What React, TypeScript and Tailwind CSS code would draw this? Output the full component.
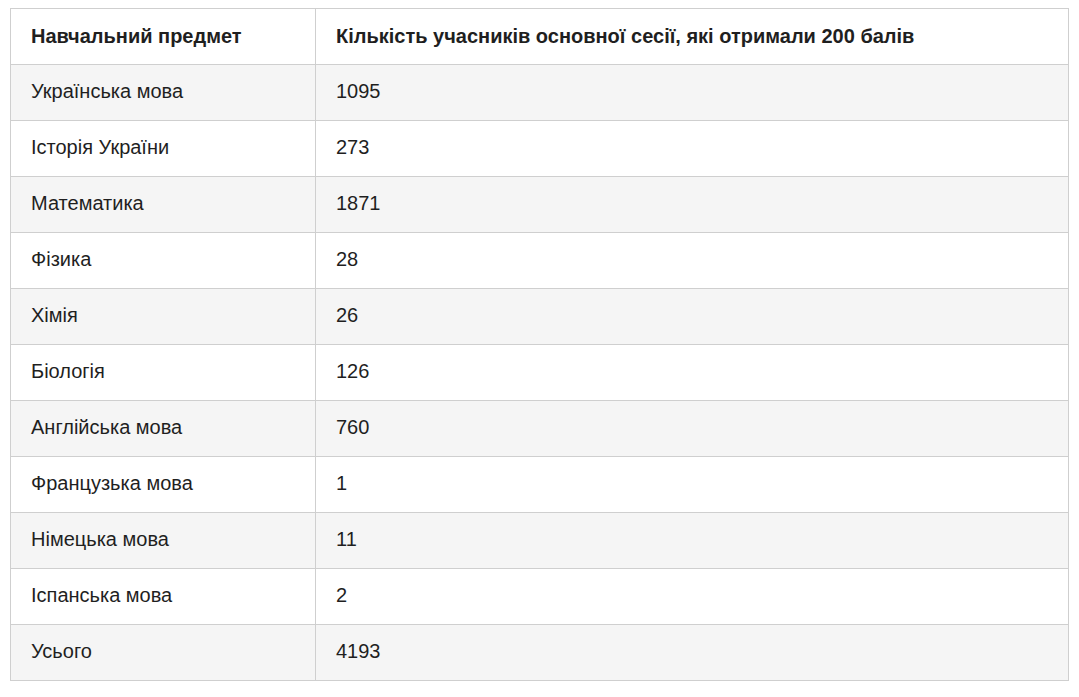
const rows: [string, string][] = [
	["Українська мова", "1095"],
	["Історія України", "273"],
	["Математика", "1871"],
	["Фізика", "28"],
	["Хімія", "26"],
	["Біологія", "126"],
	["Англійська мова", "760"],
	["Французька мова", "1"],
	["Німецька мова", "11"],
	["Іспанська мова", "2"],
	["Усього", "4193"],
];

function App() {
	return (
		<div className="min-h-screen bg-white pt-2 pl-[10px] font-['Liberation_Sans',Arial,sans-serif] text-[#1f1f1f]">
			<table className="w-[1059px] border-collapse border border-[#cfcfcf] text-[20px]">
				<thead>
					<tr className="h-[56px] bg-white">
						<th className="w-[305px] border border-[#cfcfcf] pb-[2px] pl-[20px] text-left font-bold">
							Навчальний предмет
						</th>
						<th className="border border-[#cfcfcf] pb-[2px] pl-[20px] text-left font-bold">
							Кількість учасників основної сесії, які отримали 200 балів
						</th>
					</tr>
				</thead>
				<tbody>
					{rows.map(([subject, count], i) => (
						<tr
							key={subject}
							className={i % 2 === 0 ? "h-[56px] bg-[#f5f5f5]" : "h-[56px] bg-white"}
						>
							<td className="border border-[#cfcfcf] pb-[3px] pl-[20px]">{subject}</td>
							<td className="border border-[#cfcfcf] pb-[3px] pl-[20px]">{count}</td>
						</tr>
					))}
				</tbody>
			</table>
		</div>
	);
}

export default App;
